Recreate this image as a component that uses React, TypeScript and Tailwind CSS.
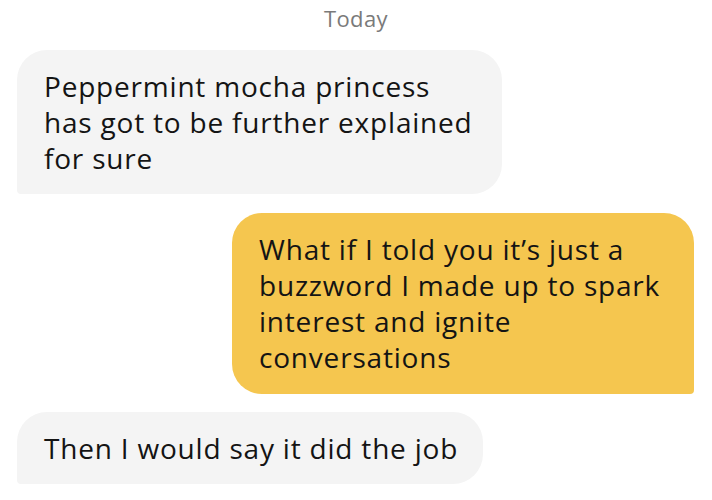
const messages = [
	{
		id: 1,
		mine: false,
		lines: ["Peppermint mocha princess", "has got to be further explained", "for sure"],
		box: "w-[485px] py-[18px]",
	},
	{
		id: 2,
		mine: true,
		lines: [
			"What if I told you it’s just a",
			"buzzword I made up to spark",
			"interest and ignite",
			"conversations",
		],
		box: "mt-[1px] w-[462px] pt-[18px] pb-[19px]",
	},
	{
		id: 3,
		mine: false,
		lines: ["Then I would say it did the job"],
		box: "w-[466px] py-[18px]",
	},
] as const;

export default function App() {
	return (
		<div className="h-[500px] w-[712px] overflow-hidden bg-white font-['Open_Sans',sans-serif] text-[#141414]">
			<div className="flex h-[36px] items-center justify-center text-[22px] tracking-[0.4px] text-[#7a7a7a]">
				Today
			</div>
			<div className="mt-[14px] flex flex-col gap-[18px] pl-[17px] pr-[18px]">
				{messages.map((msg) => (
					<ChatBubble
						key={msg.id}
						mine={msg.mine}
						lines={msg.lines}
						box={msg.box}
					/>
				))}
			</div>
		</div>
	);
}

function ChatBubble({
	mine,
	lines,
	box,
}: {
	mine: boolean;
	lines: readonly string[];
	box: string;
}) {
	const bubbleClass = mine
		? "self-end rounded-[30px] rounded-br-[4px] bg-[#f5c64f]"
		: "self-start rounded-[30px] rounded-bl-[4px] bg-[#f4f4f4]";

	return (
		<div className={`${bubbleClass} ${box} px-[27px] text-[28px] leading-[36px] tracking-[0.8px]`}>
			{lines.map((line) => (
				<div
					key={line}
					className="whitespace-nowrap">
					{line}
				</div>
			))}
		</div>
	);
}
